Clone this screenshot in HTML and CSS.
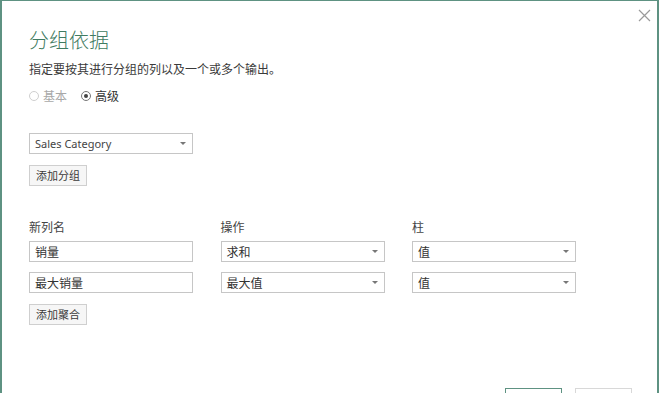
FILE: index.html
```html
<!DOCTYPE html>
<html lang="zh-CN">
<head>
    <meta charset="UTF-8">
    <meta name="viewport" content="width=device-width, initial-scale=1.0">
    <title>分组依据</title>
    <link rel="stylesheet" href="styles.css">
</head>
<body>
    <div class="dialog">
        <span class="close-btn" title="关闭">
            <svg width="13" height="13" viewBox="0 0 13 13">
                <path d="M1 1 L12 12 M12 1 L1 12" stroke="#9a9a9a" stroke-width="1.2" fill="none"/>
            </svg>
        </span>

        <h1 class="title">分组依据</h1>
        <p class="desc">指定要按其进行分组的列以及一个或多个输出。</p>

        <div class="mode-row">
            <label class="radio disabled"><span class="dot"></span>基本</label>
            <label class="radio checked"><span class="dot"></span>高级</label>
        </div>

        <div class="group-area">
            <div class="field select latin">Sales Category<i class="arrow"></i></div>
            <button class="btn">添加分组</button>
        </div>

        <div class="agg-grid">
            <div class="col-label">新列名</div>
            <div class="col-label">操作</div>
            <div class="col-label">柱</div>

            <div class="field">销量</div>
            <div class="field select">求和<i class="arrow"></i></div>
            <div class="field select">值<i class="arrow"></i></div>

            <div class="field">最大销量</div>
            <div class="field select">最大值<i class="arrow"></i></div>
            <div class="field select">值<i class="arrow"></i></div>
        </div>
        <button class="btn">添加聚合</button>

        <div class="footer">
            <button class="btn btn-ok" aria-label="确定"></button>
            <button class="btn" aria-label="取消"></button>
        </div>
    </div>
</body>
</html>
```

FILE: styles.css
```css
/* Base */
body {
    margin: 0;
    background: #fff;
    font-family: "Noto Sans CJK SC", "Noto Sans", sans-serif;
    font-size: 12px;
    color: #333;
}

/* Dialog frame */
.dialog {
    position: relative;
    box-sizing: border-box;
    width: 659px;
    height: 430px;
    border-left: 2px solid #5e9282;
    border-right: 2px solid #5e9282;
    border-top: 1px solid #5e9282;
    padding: 27px 25px 0 27px;
    overflow: hidden;
}

.close-btn {
    position: absolute;
    top: 7px;
    right: 6px;
    width: 13px;
    height: 13px;
}

.title {
    margin: 0;
    font-size: 20px;
    line-height: 24px;
    font-weight: 300;
    color: #3f7b61;
}

.desc {
    margin: 9px 0 0;
    line-height: 16px;
    color: #3a3a3a;
}

/* Radio buttons */
.mode-row {
    display: flex;
    gap: 14px;
    margin-top: 11px;
    line-height: 16px;
}

.radio {
    display: inline-flex;
    align-items: center;
    gap: 4px;
    color: #333;
}

.radio .dot {
    box-sizing: border-box;
    width: 10px;
    height: 10px;
    border: 1px solid #777;
    border-radius: 50%;
    position: relative;
}

.radio.checked .dot::after {
    content: '';
    position: absolute;
    top: 2px;
    left: 2px;
    width: 4px;
    height: 4px;
    border-radius: 50%;
    background: #444;
}

.radio.disabled {
    color: #a8a8a8;
}

.radio.disabled .dot {
    border-color: #cfcfcf;
}

/* Fields */
.group-area {
    margin-top: 29px;
    display: flex;
    flex-direction: column;
    align-items: flex-start;
    gap: 11px;
}

.field {
    box-sizing: border-box;
    position: relative;
    width: 164px;
    height: 21px;
    border: 1px solid #c6c6c6;
    background: #fff;
    padding: 0 20px 0 5px;
    line-height: 19px;
    color: #333;
}

.field.latin {
    font-family: "Noto Sans", "Noto Sans CJK SC", sans-serif;
    font-size: 11px;
    color: #444;
}

.arrow {
    position: absolute;
    right: 6px;
    top: 8px;
    width: 0;
    height: 0;
    border-left: 3px solid transparent;
    border-right: 3px solid transparent;
    border-top: 3px solid #777;
}

.btn {
    box-sizing: border-box;
    height: 21px;
    width: 58px;
    padding: 0;
    border: 1px solid #cfcfcf;
    background: #f6f6f6;
    font-family: inherit;
    font-size: 11px;
    color: #3a3a3a;
    line-height: 19px;
}

/* Aggregation grid */
.agg-grid {
    display: grid;
    grid-template-columns: 164px 164px 164px;
    column-gap: 27.5px;
    row-gap: 10px;
    margin-top: 33px;
    margin-bottom: 11px;
}

.col-label {
    line-height: 16px;
    color: #444;
    margin-bottom: -4px;
}

/* Footer */
.footer {
    display: flex;
    justify-content: flex-end;
    gap: 13px;
    margin-top: 63px;
}

.footer .btn {
    display: block;
    width: 57px;
    height: 26px;
    background: #fff;
    border-color: #d8d8d8;
}

.footer .btn-ok {
    border-color: #5e9282;
}
```
